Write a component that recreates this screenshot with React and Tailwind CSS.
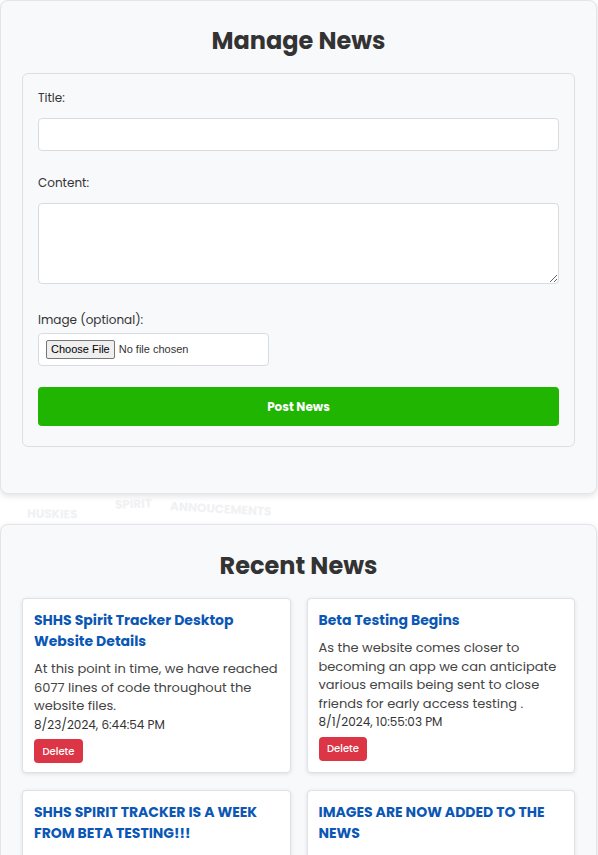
import React from 'react';

const news = [
  {
    title: 'SHHS Spirit Tracker Desktop Website Details',
    body: 'At this point in time, we have reached 6077 lines of code throughout the website files.',
    date: '8/23/2024, 6:44:54 PM',
  },
  {
    title: 'Beta Testing Begins',
    body: 'As the website comes closer to becoming an app we can anticipate various emails being sent to close friends for early access testing .',
    date: '8/1/2024, 10:55:03 PM',
  },
  {
    title: 'SHHS SPIRIT TRACKER IS A WEEK FROM BETA TESTING!!!',
    body: 'We are getting ready for the first round of beta testing.',
    date: '7/25/2024, 9:12:40 PM',
  },
  {
    title: 'IMAGES ARE NOW ADDED TO THE NEWS',
    body: 'You can now attach an image when posting news.',
    date: '7/20/2024, 4:31:18 PM',
  },
];

const NewsCard = ({ item }) => (
  <div className="bg-white border border-[#dfe1e5] rounded-[4px] shadow-[0_1px_4px_rgba(0,0,0,0.1)] px-[11px] pt-[11px] pb-[9px]">
    <h3 className="text-[14px] leading-[21px] font-bold text-[#0b57b5]">{item.title}</h3>
    <p className="mt-[8px] text-[13px] leading-[18.5px] text-[#444]">{item.body}</p>
    <p className="text-[12px] leading-[18.5px] text-[#333]">{item.date}</p>
    <button className="mt-[5px] h-[24px] px-[8.5px] rounded-[4px] bg-[#dc3545] text-white text-[10px] font-medium">
      Delete
    </button>
  </div>
);

const App = () => {
  return (
    <div className="min-h-screen bg-white font-['Poppins','Inter',sans-serif] text-[#333]">
      <section className="mr-[1px] rounded-[8px] border border-[#e3e5e9] bg-[#f8f9fb] px-[21px] pt-[25px] pb-[46px] shadow-[0_2px_6px_rgba(0,0,0,0.12)]">
        <h2 className="text-center text-[24px] leading-[30px] font-bold text-[#333]">Manage News</h2>

        <form className="mt-[17px] rounded-[6px] border border-[#dcdfe4] bg-[#f8f9fb] px-[15px] pt-[14px] pb-[20px]">
          <label className="block text-[12px] leading-[20px] text-[#333]">Title:</label>
          <input
            type="text"
            className="mt-[10px] block w-full h-[33px] rounded-[4px] border border-[#d8dbe0] bg-white px-2 text-[13px] outline-none"
          />

          <label className="mt-[22px] block text-[12px] leading-[20px] text-[#333]">Content:</label>
          <textarea className="mt-[10px] block w-full h-[81px] rounded-[4px] border border-[#d8dbe0] bg-white px-2 py-1 text-[13px] outline-none" />

          <label className="mt-[26px] block text-[12px] leading-[20px] text-[#333]">Image (optional):</label>
          <div className="mt-[3px] w-[231px] h-[33px] rounded-[4px] border border-[#d8dbe0] bg-white flex items-center px-[7px]">
            <input type="file" className="text-[11px] font-['Liberation_Sans',Arial,sans-serif] text-[#333] w-full file:mr-[4px] file:px-[4px] file:py-0 file:border file:border-[#767676] file:rounded-[2px] file:bg-[#efefef] file:text-[11px] file:text-black" />
          </div>

          <button
            type="button"
            className="mt-[21px] block w-full h-[39px] rounded-[4px] bg-[#1fb500] text-white text-[12px] font-bold"
          >
            Post News
          </button>
        </form>
      </section>

      <div className="relative h-[30px] overflow-hidden select-none">
        <span className="absolute left-[27px] top-[12px] rotate-[1deg] text-[12px] leading-[16px] font-bold text-[#f0f1f3]">HUSKIES</span>
        <span className="absolute left-[115px] top-[2px] -rotate-[2deg] text-[12px] leading-[16px] font-bold text-[#f0f1f3]">SPIRIT</span>
        <span className="absolute left-[170px] top-[7px] rotate-[3deg] text-[12px] leading-[16px] font-bold text-[#f0f1f3]">ANNOUCEMENTS</span>
      </div>

      <section className="mr-[1px] rounded-[8px] border border-[#e3e5e9] bg-[#f8f9fb] px-[21px] pt-[26px] pb-[30px] shadow-[0_2px_6px_rgba(0,0,0,0.12)]">
        <h2 className="text-center text-[24px] leading-[30px] font-bold text-[#333]">Recent News</h2>
        <div className="mt-[17px] grid grid-cols-2 gap-x-[16px] gap-y-[17px]">
          {news.map((item) => (
            <NewsCard key={item.title} item={item} />
          ))}
        </div>
      </section>
    </div>
  );
};

export default App;
